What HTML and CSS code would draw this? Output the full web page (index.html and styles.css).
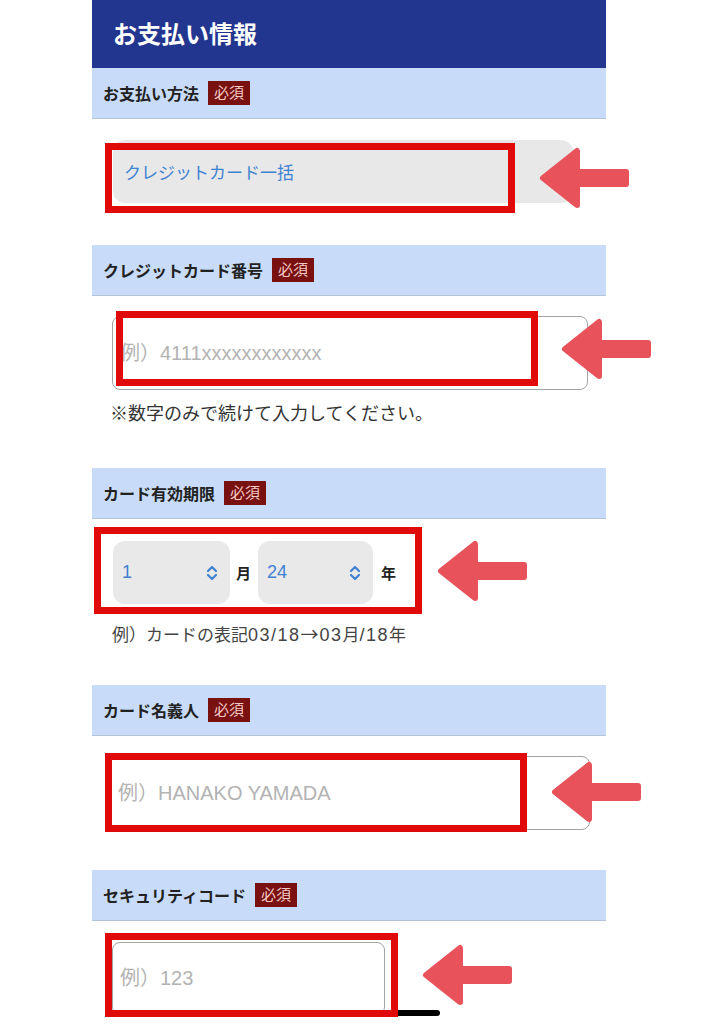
FILE: index.html
```html
<!DOCTYPE html>
<html lang="ja">
<head>
    <meta charset="UTF-8">
    <meta name="viewport" content="width=device-width, initial-scale=1.0">
    <title>お支払い情報</title>
    <link rel="stylesheet" href="styles.css">
</head>
<body>
    <svg class="defs" width="0" height="0">
        <symbol id="arrow-left" viewBox="0 0 92 62">
            <path d="M4 31 L38 4 L38 58 Z" fill="#e8525a" stroke="#e8525a" stroke-width="6" stroke-linejoin="round"/>
            <rect x="34" y="22" width="56" height="18" rx="3" fill="#e8525a"/>
        </symbol>
        <symbol id="updown" viewBox="0 0 12 16">
            <path d="M2 6 L6 2 L10 6 M2 10 L6 14 L10 10" fill="none" stroke="#3e82d2" stroke-width="2.2" stroke-linecap="round" stroke-linejoin="round"/>
        </symbol>
    </svg>

    <div class="screen">
        <div class="panel">
            <!-- Header -->
            <header class="panel-head">
                <h1>お支払い情報</h1>
            </header>

            <!-- Payment method -->
            <section class="field">
                <div class="field-label"><span>お支払い方法</span><span class="req">必須</span></div>
                <div class="field-body body-pay">
                    <div class="select-wide">クレジットカード一括</div>
                </div>
            </section>

            <!-- Card number -->
            <section class="field">
                <div class="field-label"><span>クレジットカード番号</span><span class="req">必須</span></div>
                <div class="field-body body-card">
                    <input class="text-input input-card" type="text" placeholder="例）4111xxxxxxxxxxxx">
                    <p class="note">※数字のみで続けて入力してください。</p>
                </div>
            </section>

            <!-- Expiry -->
            <section class="field">
                <div class="field-label"><span>カード有効期限</span><span class="req">必須</span></div>
                <div class="field-body body-exp">
                    <div class="date-row">
                        <div class="picker picker-month">
                            <span>1</span>
                            <svg width="12" height="16"><use href="#updown"/></svg>
                        </div>
                        <span class="unit unit-month">月</span>
                        <div class="picker picker-year">
                            <span>24</span>
                            <svg width="12" height="16"><use href="#updown"/></svg>
                        </div>
                        <span class="unit unit-year">年</span>
                    </div>
                    <p class="example">例）カードの表記<span class="num">03/18</span><span class="to">→</span><span class="num">03</span>月<span class="num">/18</span>年</p>
                </div>
            </section>

            <!-- Card holder -->
            <section class="field">
                <div class="field-label"><span>カード名義人</span><span class="req">必須</span></div>
                <div class="field-body body-name">
                    <input class="text-input input-name" type="text" placeholder="例）HANAKO YAMADA">
                </div>
            </section>

            <!-- Security code -->
            <section class="field">
                <div class="field-label"><span>セキュリティコード</span><span class="req">必須</span></div>
                <div class="field-body body-cvc">
                    <input class="text-input input-cvc" type="text" placeholder="例）123">
                </div>
            </section>
        </div>

        <div class="home-bar"></div>

        <!-- Annotations -->
        <div class="mark mark-pay"></div>
        <div class="mark mark-card"></div>
        <div class="mark mark-exp"></div>
        <div class="mark mark-name"></div>
        <div class="mark mark-cvc"></div>

        <svg class="arrow arrow-pay"><use href="#arrow-left"/></svg>
        <svg class="arrow arrow-card"><use href="#arrow-left"/></svg>
        <svg class="arrow arrow-exp"><use href="#arrow-left"/></svg>
        <svg class="arrow arrow-name"><use href="#arrow-left"/></svg>
        <svg class="arrow arrow-cvc"><use href="#arrow-left"/></svg>
    </div>
</body>
</html>
```

FILE: styles.css
```css
/* General */
body {
    margin: 0;
    padding: 0;
    background-color: #fff;
    font-family: "Liberation Sans", "Noto Sans CJK JP", sans-serif;
    color: #222;
}

.defs {
    position: absolute;
}

.screen {
    position: relative;
    width: 725px;
    height: 1024px;
    overflow: hidden;
}

.panel {
    width: 514px;
    margin-left: 92px;
}

/* Header */
.panel-head {
    box-sizing: border-box;
    background-color: #22358f;
    height: 68px;
    display: flex;
    align-items: center;
    padding: 0 0 4px 21px;
}

.panel-head h1 {
    margin: 0;
    color: #fff;
    font-size: 24px;
    font-weight: bold;
}

/* Field rows */
.field-label {
    background-color: #c8dcfa;
    height: 50px;
    border-bottom: 1px solid #b3c3da;
    display: flex;
    align-items: center;
    gap: 9px;
    padding-left: 11px;
    font-size: 16px;
    font-weight: bold;
    color: #222;
}

.req {
    background-color: #7a1111;
    color: #f3c9c4;
    font-weight: normal;
    font-size: 15px;
    line-height: 20px;
    padding: 2px 6px;
}

.body-pay {
    padding: 21px 33px 42px 21px;
}

.body-card {
    padding: 20px 0 42px 20px;
}

.body-exp {
    padding: 22px 0 37px 21px;
}

.body-name {
    padding: 20px 0 40px 18px;
}

.body-cvc {
    padding: 21px 0 0 20px;
}

/* Controls */
.select-wide {
    height: 63px;
    background-color: #e8e8e8;
    border-radius: 12px;
    display: flex;
    align-items: center;
    padding-left: 11px;
    color: #3e82d2;
    font-size: 17px;
}

.text-input {
    display: block;
    box-sizing: border-box;
    height: 74px;
    border: 1px solid #a3a3a3;
    border-radius: 8px;
    padding: 0 7px;
    background: #fff;
    font-family: inherit;
    font-size: 20px;
    color: #333;
}

.text-input::placeholder {
    color: #b3b3b3;
}

.input-card {
    width: 476px;
}

.input-name {
    width: 480px;
}

.input-cvc {
    width: 273px;
    height: 73px;
}

.note {
    margin: 12px 0 0 -2px;
    font-size: 18px;
    line-height: 24px;
    color: #333;
}

.date-row {
    display: flex;
    align-items: center;
}

.picker {
    box-sizing: border-box;
    height: 63px;
    background-color: #e9e9e9;
    border-radius: 12px;
    display: flex;
    align-items: center;
    justify-content: space-between;
    padding: 0 12px 0 9px;
    color: #3e82d2;
    font-size: 18px;
}

.picker-month {
    width: 117px;
}

.picker-year {
    width: 115px;
}

.unit {
    font-size: 15px;
    font-weight: bold;
    color: #222;
}

.unit-month {
    margin: 0 7px 0 6px;
}

.unit-year {
    margin-left: 8px;
}

.example {
    margin: 17px 0 0 -1px;
    font-size: 17px;
    line-height: 24px;
    color: #444;
}

.example .num {
    font-size: 18px;
    letter-spacing: 1.5px;
}

.example .to {
    font-family: "Noto Sans CJK JP", sans-serif;
    font-size: 18px;
    margin-right: 1px;
}

/* iOS home indicator */
.home-bar {
    position: absolute;
    left: 260px;
    top: 1010px;
    width: 180px;
    height: 6px;
    border-radius: 3px;
    background-color: #000;
}

/* Annotation overlays */
.mark {
    position: absolute;
    box-sizing: border-box;
    border: 7px solid #e10a0a;
}

.mark-pay { left: 105px; top: 143px; width: 410px; height: 70px; }
.mark-card { left: 116px; top: 311px; width: 422px; height: 75px; }
.mark-exp { left: 94px; top: 527px; width: 328px; height: 87px; }
.mark-name { left: 105px; top: 753px; width: 422px; height: 79px; }
.mark-cvc { left: 105px; top: 933px; width: 293px; height: 84px; }

.arrow {
    position: absolute;
    width: 92px;
    height: 62px;
}

.arrow-pay { left: 539px; top: 147px; }
.arrow-card { left: 561px; top: 318px; }
.arrow-exp { left: 437px; top: 540px; }
.arrow-name { left: 551px; top: 761px; }
.arrow-cvc { left: 422px; top: 944px; }
```
